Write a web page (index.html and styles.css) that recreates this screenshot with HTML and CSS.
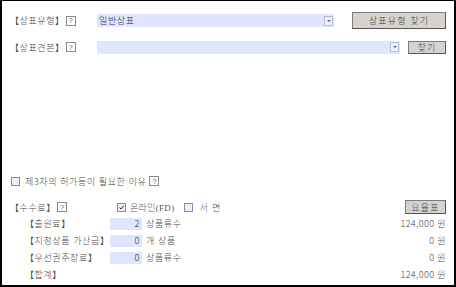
FILE: index.html
```html
<!DOCTYPE html>
<html lang="ko">
<head>
<meta charset="utf-8">
<link rel="stylesheet" href="styles.css">
</head>
<body>
<div class="frame">
  <div class="row row-type">
    <span class="label">【상표유형】<span class="help">?</span></span>
    <div class="select select-type"><span class="select-text">일반상표</span><span class="drop"></span></div>
    <button class="btn btn-type">상표유형 찾기</button>
  </div>
  <div class="row row-sample">
    <span class="label">【상표견본】 <span class="help">?</span></span>
    <div class="select select-sample"><span class="select-text"></span><span class="drop"></span></div>
    <button class="btn btn-find">찾기</button>
  </div>

  <div class="row row-reason">
    <span class="check"></span>
    <span class="reason-text">제3자의 허가등이 필요한 이유</span><span class="help">?</span>
  </div>

  <div class="row row-fee-head">
    <span class="fee-title">【수수료】<span class="help">?</span></span>
    <span class="check checked"><svg viewBox="0 0 9 9" width="9" height="9"><path d="M2 4.5 L3.8 6.5 L7.2 2" fill="none" stroke="#222" stroke-width="1.2"/></svg></span>
    <span class="opt opt-online serif">온라인(FD)</span>
    <span class="check"></span>
    <span class="opt opt-paper serif">서 면</span>
    <button class="btn btn-rate">요율표</button>
  </div>

  <div class="fee-row">
    <span class="fee-label">【출원료】</span>
    <span class="num">2</span>
    <span class="unit">상품류수</span>
    <span class="amount">124,000 원</span>
  </div>
  <div class="fee-row">
    <span class="fee-label">【지정상품 가산금】</span>
    <span class="num">0</span>
    <span class="unit">개 상품</span>
    <span class="amount">0 원</span>
  </div>
  <div class="fee-row">
    <span class="fee-label">【우선권주장료】</span>
    <span class="num">0</span>
    <span class="unit">상품류수</span>
    <span class="amount">0 원</span>
  </div>
  <div class="fee-row">
    <span class="fee-label">【합계】</span>
    <span class="num blank"></span>
    <span class="unit"></span>
    <span class="amount">124,000 원</span>
  </div>
</div>
</body>
</html>
```
FILE: styles.css
```css
* { box-sizing: border-box; }
html, body { margin: 0; padding: 0; background: #fff; }
body {
  font-family: "Noto Sans CJK KR", "Noto Sans", sans-serif;
  font-size: 9px;
  font-weight: 300;
  letter-spacing: 0.6px;
  color: #4a4a4a;
}
.frame {
  width: 456px;
  height: 287px;
  border: 2px solid #000;
  border-top-width: 1px;
  padding: 10px 8px 0 8px;
  display: flex;
  flex-direction: column;
}
.row { display: flex; align-items: center; }
.label { width: 87px; display: flex; align-items: center; white-space: nowrap; }
.help {
  display: inline-flex; align-items: center; justify-content: center;
  width: 10px; height: 10px;
  border: 1px solid #8a8a8a;
  font-size: 7px; line-height: 1;
  letter-spacing: 0;
  color: #555;
  margin-left: 1px;
  font-family: "Liberation Sans", sans-serif;
  font-weight: 400;
}
.select {
  background: #dfe4ff;
  height: 13px;
  display: flex; align-items: center; justify-content: space-between;
  padding-left: 2px; padding-right: 1px;
}
.select-text { color: #333; }
.drop {
  width: 9px; height: 10px;
  background: #eef0f8;
  border: 1px solid #b8bfd8;
  position: relative;
}
.drop::after {
  content: ""; position: absolute; left: 2px; top: 3px;
  border-left: 2px solid transparent; border-right: 2px solid transparent;
  border-top: 2px solid #666;
}
.row-type { height: 17px; margin-top: 1px; }
.select-type { width: 237px; }
.btn {
  font-family: "Noto Sans CJK KR", sans-serif;
  font-size: 9px; font-weight: 300; color: #444;
  letter-spacing: 1.2px;
  background: #d6d3ce;
  border: 1px solid #7d7d7d;
  border-right-color: #555; border-bottom-color: #555;
  padding: 0; line-height: 1;
}
.btn-type { width: 94px; height: 17px; margin-left: 18px; }
.row-sample { height: 14px; margin-top: 11px; }
.select-sample { width: 303px; }
.btn-find { width: 38px; height: 13px; margin-left: 8px; }

.check {
  display: inline-flex; align-items: center; justify-content: center;
  width: 9px; height: 9px;
  border: 1px solid #7f8fb0;
  background: #edf0f7;
  flex: none;
}
.check svg { display: block; }
.row-reason { margin-top: 121px; height: 12px; padding-left: 1px; }
.reason-text { margin-left: 5px; margin-right: 2px; }

.row-fee-head { margin-top: 12px; height: 16px; }
.fee-title { width: 107px; display: flex; align-items: center; white-space: nowrap; }
.opt { margin-left: 4px; }
.serif { font-family: "Liberation Serif", "Noto Sans CJK KR", serif; color: #555; letter-spacing: 0.3px; }
.opt-online { margin-right: 10px; }
.opt-paper { margin-left: 6px; letter-spacing: 1px; }
.btn-rate { margin-left: auto; width: 41px; height: 14px; }

.fee-row { display: flex; align-items: center; height: 17px; }
.fee-label { width: 100px; padding-left: 15px; white-space: nowrap; }
.num {
  width: 32px; height: 12px;
  background: #dfe4ff;
  text-align: right;
  line-height: 12px;
  padding-right: 2px;
  color: #333;
}
.num.blank { background: transparent; }
.unit { margin-left: 4px; }
.amount { margin-left: auto; color: #444; letter-spacing: 0.4px; }
```
